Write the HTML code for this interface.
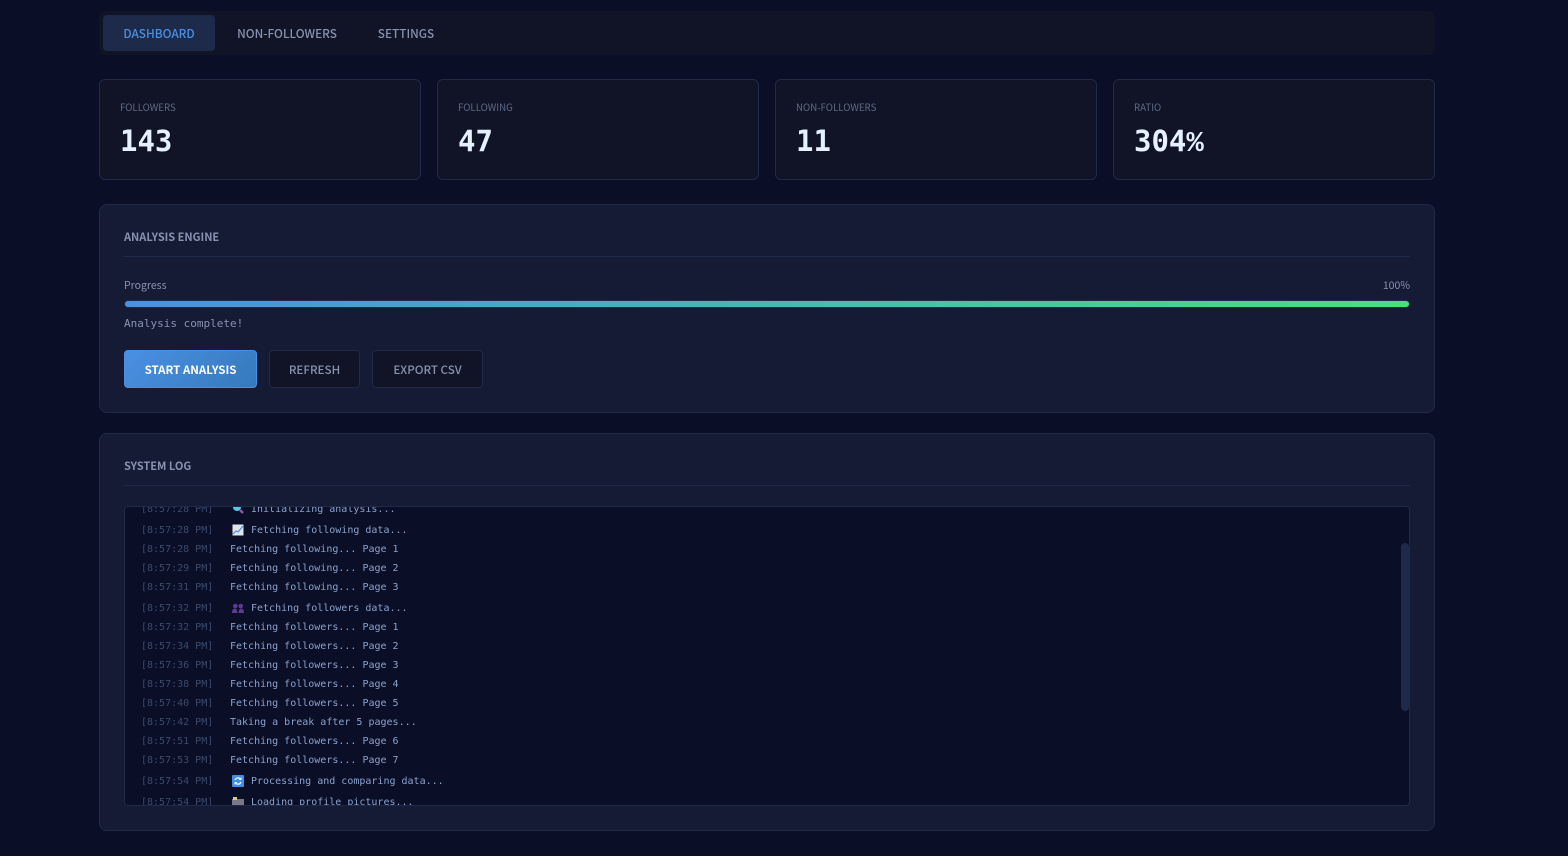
<!DOCTYPE html>
<html><head><meta charset="utf-8"><style>
*{box-sizing:border-box}
html,body{margin:0;padding:0;width:1568px;height:856px;overflow:hidden;background:#0a0e27;font-family:"Noto Sans CJK JP","Liberation Sans",sans-serif}
div,span{position:absolute;white-space:nowrap}
svg{position:absolute}
.mono{font-family:"DejaVu Sans Mono","Liberation Mono",monospace}
.tab{top:15px;height:36px;line-height:38px;font-size:11.8px;font-weight:500;color:#8892b0;text-align:center;border-radius:4px}
.stat{top:79px;width:322px;height:101px;background:#101426;border:1px solid #1e2a4a;border-radius:6px}
.lab{left:20px;top:20px;font-size:9.7px;line-height:15px;color:#5f6a88}
.val{left:20px;top:43px;font-size:29px;line-height:36px;font-weight:700;color:#e6f1ff;font-family:"DejaVu Sans Mono",monospace}
.panel{left:99px;width:1336px;background:#151b35;border:1px solid #1e2a4a;border-radius:8px}
.h{left:24px;font-size:11px;line-height:16px;font-weight:700;color:#8892b0}
.rule{left:24px;width:1286px;height:1px;background:#1e2a4a}
.btn{top:350px;height:38px;line-height:38px;font-size:11.6px;font-weight:500;text-align:center;border-radius:4px;background:#101426;border:1px solid #1e2a4a;color:#8892b0}
.r{left:0;width:1284px;height:14px;line-height:14px;font-size:10px;font-family:"DejaVu Sans Mono",monospace}
.t{left:16px;color:#3b4a6b}
.m{left:105px;color:#8aa2cc}
.e{left:126px;color:#8aa2cc}
</style></head><body>
<div style="left:99px;top:11px;width:1336px;height:44px;background:#101426;border-radius:6px"></div>
<div class="tab" style="left:103px;width:112px;background:#1e2a4a;color:#4a90e2">DASHBOARD</div>
<div class="tab" style="left:217px;width:140px">NON-FOLLOWERS</div>
<div class="tab" style="left:359px;width:94px">SETTINGS</div>

<div class="stat" style="left:99px"><div class="lab">FOLLOWERS</div><div class="val">143</div></div>
<div class="stat" style="left:437px"><div class="lab">FOLLOWING</div><div class="val">47</div></div>
<div class="stat" style="left:775px"><div class="lab">NON-FOLLOWERS</div><div class="val">11</div></div>
<div class="stat" style="left:1113px"><div class="lab">RATIO</div><div class="val">304<span style="position:static;font-family:'Liberation Mono',monospace">%</span></div></div>

<div class="panel" style="top:204px;height:209px"></div>
<div class="h" style="left:124px;top:229px">ANALYSIS ENGINE</div>
<div class="rule" style="left:124px;top:256px"></div>
<div style="left:124px;top:278px;font-size:10.5px;line-height:16px;color:#8892b0">Progress</div>
<div style="right:158px;top:278px;font-size:10.5px;line-height:16px;color:#8892b0">100%</div>
<div style="left:124px;top:300px;width:1286px;height:8px;background:#1e2a4a;border-radius:4px"></div>
<div style="left:125px;top:301px;width:1284px;height:6px;border-radius:3px;background:linear-gradient(90deg,#4a90e2,#4ade80)"></div>
<div class="mono" style="left:124px;top:316px;font-size:11px;line-height:16px;color:#8892b0">Analysis complete!</div>
<div class="btn" style="left:124px;width:133px;background:linear-gradient(135deg,#4a90e2,#357abd);border-color:#4a90e2;color:#fff;font-weight:700;font-size:11.5px">START ANALYSIS</div>
<div class="btn" style="left:269px;width:91px">REFRESH</div>
<div class="btn" style="left:372px;width:111px">EXPORT CSV</div>

<div class="panel" style="top:433px;height:398px"></div>
<div class="h" style="left:124px;top:458px">SYSTEM LOG</div>
<div class="rule" style="left:124px;top:485px"></div>
<div style="left:124px;top:506px;width:1286px;height:300px;background:#0a0e27;border:1px solid #1e2a4a;border-radius:4px;overflow:hidden">
<div style="left:1276px;top:36px;width:8px;height:168px;background:#1e2a4a;border-radius:4px"></div>

<div class="r" style="top:-4px"><span class="t">[8:57:28 PM]</span><svg style="left:107px;top:0" width="12" height="12"><circle cx="5" cy="4" r="4" fill="#5cc4e8"/><path d="M8 7l3 3" stroke="#9a4fa0" stroke-width="2.5"/></svg><span class="e">Initializing analysis...</span></div>
<div class="r" style="top:17px"><span class="t">[8:57:28 PM]</span><svg style="left:107px;top:0" width="12" height="12"><rect x=".5" y=".5" width="11" height="11" fill="#dfe3ea"/><path d="M1 10l3-3 2 1 5-6" stroke="#4a90e2" stroke-width="1.2" fill="none"/></svg><span class="e">Fetching following data...</span></div>
<div class="r" style="top:36px"><span class="t">[8:57:28 PM]</span><span class="m">Fetching following... Page 1</span></div>
<div class="r" style="top:55px"><span class="t">[8:57:29 PM]</span><span class="m">Fetching following... Page 2</span></div>
<div class="r" style="top:74px"><span class="t">[8:57:31 PM]</span><span class="m">Fetching following... Page 3</span></div>
<div class="r" style="top:95px"><span class="t">[8:57:32 PM]</span><svg style="left:107px;top:1px" width="12" height="11" fill="#5d3a94"><circle cx="3.3" cy="3" r="2.3"/><circle cx="8.7" cy="3" r="2.3"/><path d="M0 10c0-6 5.500-6 5.500 0zM6.500 10c0-6 5.500-6 5.500 0z"/></svg><span class="e">Fetching followers data...</span></div>
<div class="r" style="top:114px"><span class="t">[8:57:32 PM]</span><span class="m">Fetching followers... Page 1</span></div>
<div class="r" style="top:133px"><span class="t">[8:57:34 PM]</span><span class="m">Fetching followers... Page 2</span></div>
<div class="r" style="top:152px"><span class="t">[8:57:36 PM]</span><span class="m">Fetching followers... Page 3</span></div>
<div class="r" style="top:171px"><span class="t">[8:57:38 PM]</span><span class="m">Fetching followers... Page 4</span></div>
<div class="r" style="top:190px"><span class="t">[8:57:40 PM]</span><span class="m">Fetching followers... Page 5</span></div>
<div class="r" style="top:209px"><span class="t">[8:57:42 PM]</span><span class="m">Taking a break after 5 pages...</span></div>
<div class="r" style="top:228px"><span class="t">[8:57:51 PM]</span><span class="m">Fetching followers... Page 6</span></div>
<div class="r" style="top:247px"><span class="t">[8:57:53 PM]</span><span class="m">Fetching followers... Page 7</span></div>
<div class="r" style="top:268px"><span class="t">[8:57:54 PM]</span><svg style="left:107px;top:0" width="12" height="12"><rect width="12" height="12" rx="1" fill="#3f8fe8"/><path d="M3 5a3.200 3.200 0 0 1 5.500-1M9 7a3.200 3.200 0 0 1-5.500 1" fill="none" stroke="#e8f1fb" stroke-width="1.4"/><path d="M9.500 2v3h-3zM2.500 10V7h3z" fill="#e8f1fb"/></svg><span class="e">Processing and comparing data...</span></div>
<div class="r" style="top:289px"><span class="t">[8:57:54 PM]</span><svg style="left:107px;top:0" width="12" height="12"><rect y="3" width="12" height="9" fill="#77798a"/><rect x="1" y="1" width="4" height="3" fill="#e3c678"/></svg><span class="e">Loading profile pictures...</span></div>
</div>
</body></html>
